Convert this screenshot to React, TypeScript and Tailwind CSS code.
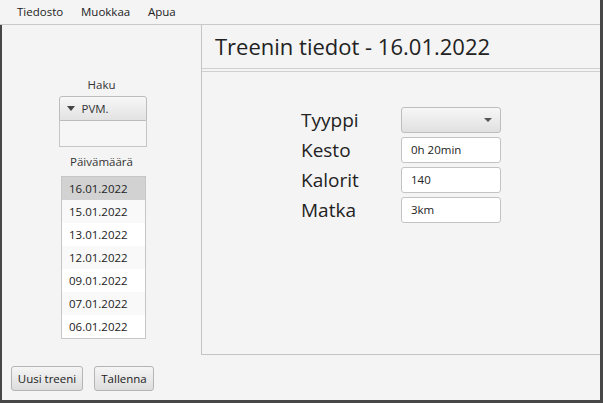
import React from "react";

const dates = [
  "16.01.2022",
  "15.01.2022",
  "13.01.2022",
  "12.01.2022",
  "09.01.2022",
  "07.01.2022",
  "06.01.2022",
];

function Field({ value }: { value: string }) {
  return (
    <div className="h-[26px] w-[100px] rounded-[3px] border border-[#c3c3c3] bg-white pl-[9px] text-[11.5px] leading-[24px] text-[#222]">
      {value}
    </div>
  );
}

export default function App() {
  return (
    <div
      className="flex h-[403px] w-[603px] flex-col bg-[#474747] text-[#333]"
      style={{ fontFamily: '"Open Sans", "Noto Sans", sans-serif' }}
    >
      <div className="mr-[3px] flex h-[25px] items-center border-b border-[#c9c9c9] bg-[#f4f4f4] text-[11.5px] text-[#222]">
        <span className="ml-[17px] w-[64px]">Tiedosto</span>
        <span className="w-[67px]">Muokkaa</span>
        <span>Apua</span>
      </div>
      <div className="mb-[3px] ml-[2px] mr-[3px] flex flex-1 bg-[#f4f4f4]">
        <div className="flex w-[199px] flex-col">
          <div className="mt-[51px] text-center text-[11.5px] leading-[17px]">Haku</div>
          <div className="mx-auto mt-[3px] w-[88px] translate-x-[1px]">
            <div className="flex h-[25px] items-center rounded-t-[3px] border border-[#bdbdbd] bg-gradient-to-b from-[#f7f7f7] to-[#e2e2e2] text-[11.5px]">
              <svg width="8" height="6" viewBox="0 0 8 6" className="ml-[7px]">
                <polygon points="0,0 8,0 4,5" fill="#444" />
              </svg>
              <span className="ml-[7px]">PVM.</span>
            </div>
            <div className="h-[26px] border border-t-0 border-[#c6c6c6] bg-[#f6f6f6]" />
          </div>
          <div className="mt-[6px] text-center text-[11.5px] leading-[17px]">Päivämäärä</div>
          <div className="mx-auto mt-[6px] w-[85px] translate-x-[2px] border border-[#c6c6c6] bg-white">
            {dates.map((d, i) => (
              <div
                key={d}
                className={
                  "h-[23px] pl-[7px] text-[11.5px] leading-[23px] text-[#222] " +
                  (i === 0 ? "bg-[#d2d2d2]" : i % 2 === 1 ? "bg-[#f9f9f9]" : "bg-white")
                }
              >
                {d}
              </div>
            ))}
          </div>
          <div className="mt-auto mb-[9px] ml-[9px] flex gap-[11px]">
            <button className="h-[25px] w-[72px] rounded-[3px] border border-[#b5b5b5] bg-gradient-to-b from-[#f5f5f5] to-[#dddddd] text-[11.5px] text-[#222]">
              Uusi treeni
            </button>
            <button className="h-[25px] w-[60px] rounded-[3px] border border-[#b5b5b5] bg-gradient-to-b from-[#f5f5f5] to-[#dddddd] text-[11.5px] text-[#222]">
              Tallenna
            </button>
          </div>
        </div>
        <div className="flex flex-1 flex-col">
          <div className="flex h-[330px] flex-col border-b border-l border-[#c4c4c4]">
            <div className="flex h-[44px] items-center border-b border-[#cfcfcf] pl-[13px] text-[22px] text-[#222]">
              Treenin tiedot - 16.01.2022
            </div>
            <div className="h-[3px] border-b border-[#cfcfcf]" />
            <div className="ml-[99px] mt-[35px] grid grid-cols-[100px_100px] gap-y-[4px] text-[19px] leading-[26px] text-[#222]">
              <span>Tyyppi</span>
              <div className="flex h-[26px] w-[100px] items-center justify-end rounded-[3px] border border-[#bdbdbd] bg-gradient-to-b from-[#f7f7f7] to-[#e0e0e0] pr-[8px]">
                <svg width="8" height="5" viewBox="0 0 8 5">
                  <polygon points="0,0 8,0 4,4" fill="#555" />
                </svg>
              </div>
              <span>Kesto</span>
              <Field value="0h 20min" />
              <span>Kalorit</span>
              <Field value="140" />
              <span>Matka</span>
              <Field value="3km" />
            </div>
          </div>
        </div>
      </div>
    </div>
  );
}
